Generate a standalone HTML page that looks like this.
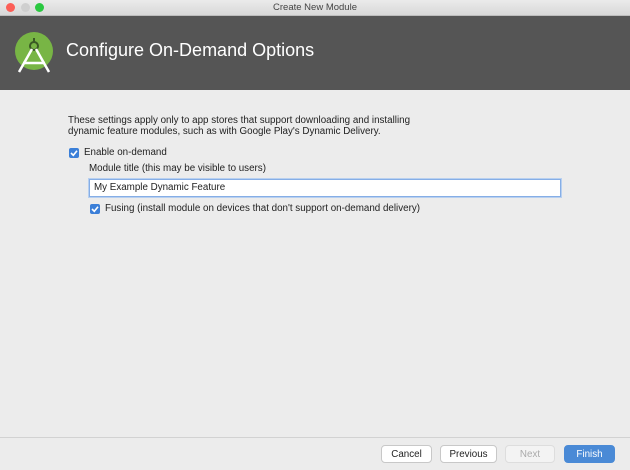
<!DOCTYPE html>
<html><head><style>
body{margin:0;width:630px;height:470px;overflow:hidden;background:#ececec;font-family:"Liberation Sans",sans-serif;position:relative}
.abs{position:absolute}
.t{font-size:9.8px;color:#222;white-space:nowrap}
.cb{width:10px;height:10px;background:#3b7fd8;border-radius:2px}
.cb svg{display:block}
.btn{height:16px;top:445px;border:1px solid #c8c8c8;background:#fff;border-radius:4px;font-size:9.8px;text-align:center;line-height:17px;color:#222}
</style></head><body>
<div class="abs" style="left:0;top:0;width:630px;height:15px;background:linear-gradient(#ebebeb,#d8d8d8);border-bottom:1px solid #bdbdbd"></div>
<div class="abs" style="left:6px;top:3px;width:9px;height:9px;border-radius:50%;background:#fc5f57"></div>
<div class="abs" style="left:21px;top:3px;width:9px;height:9px;border-radius:50%;background:#cfcfcf"></div>
<div class="abs" style="left:35px;top:3px;width:9px;height:9px;border-radius:50%;background:#2ac840"></div>
<div class="abs t" style="left:0;width:630px;text-align:center;top:2px;color:#444;font-size:9.5px">Create New Module</div>
<div class="abs" style="left:0;top:16px;width:630px;height:74px;background:#555"></div>
<svg class="abs" style="left:12px;top:30px" width="44" height="46" viewBox="0 0 44 46">
<circle cx="22" cy="21" r="19" fill="#78b545"/>
<circle cx="22" cy="16" r="4" fill="none" stroke="#3a5a24" stroke-width="2"/>
<rect x="21" y="8" width="2" height="4" fill="#3a5a24"/>
<path d="M20 19 L7 42 M24 19 L37 42 M11 33 H33" stroke="#fff" stroke-width="2.5" fill="none"/>
</svg>
<div class="abs" style="left:66px;top:40px;font-size:18px;color:#fff">Configure On-Demand Options</div>
<div class="abs t" style="left:68px;top:115px;line-height:11px">These settings apply only to app stores that support downloading and installing<br>dynamic feature modules, such as with Google Play's Dynamic Delivery.</div>
<div class="abs cb" style="left:69px;top:148px"><svg width="10" height="10"><path d="M2 5 L4.3 7.3 L8 2.7" stroke="#fff" stroke-width="1.6" fill="none"/></svg></div>
<div class="abs t" style="left:84px;top:147px">Enable on-demand</div>
<div class="abs t" style="left:89px;top:163px">Module title (this may be visible to users)</div>
<div class="abs" style="left:89px;top:179px;width:470px;height:16px;background:#fff;border:1px solid #86aee6;box-shadow:0 0 0 1px #b8d0f0"></div>
<div class="abs t" style="left:94px;top:182px">My Example Dynamic Feature</div>
<div class="abs cb" style="left:90px;top:204px"><svg width="10" height="10"><path d="M2 5 L4.3 7.3 L8 2.7" stroke="#fff" stroke-width="1.6" fill="none"/></svg></div>
<div class="abs t" style="left:105px;top:203px">Fusing (install module on devices that don't support on-demand delivery)</div>
<div class="abs" style="left:0;top:437px;width:630px;height:1px;background:#d2d2d2"></div>
<div class="abs btn" style="left:381px;width:49px">Cancel</div>
<div class="abs btn" style="left:440px;width:55px">Previous</div>
<div class="abs btn" style="left:505px;width:48px;color:#aaa;background:#f3f3f3;border-color:#ddd">Next</div>
<div class="abs btn" style="left:564px;width:49px;background:#4a8ad6;border-color:#4a8ad6;color:#fff">Finish</div>
</body></html>
